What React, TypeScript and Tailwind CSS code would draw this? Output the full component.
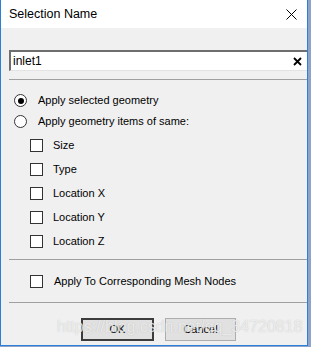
import React from "react";

const font = { fontFamily: '"Liberation Sans", Arial, sans-serif' };

function Radio({ checked }: { checked?: boolean }) {
  return (
    <div className="w-[13px] h-[13px] rounded-full border border-[#333333] bg-white flex items-center justify-center shrink-0">
      {checked && <div className="w-[6px] h-[6px] rounded-full bg-black" />}
    </div>
  );
}

function Check() {
  return <div className="w-[13px] h-[13px] border border-[#333333] bg-white shrink-0" />;
}

function CheckRow({ label }: { label: string }) {
  return (
    <div className="h-[24px] flex items-center pl-[29px]">
      <Check />
      <span className="ml-[10px] text-[11px] text-black leading-none">{label}</span>
    </div>
  );
}

export default function App() {
  return (
    <div className="w-[311px] h-[347px] bg-[#8fa3c9] overflow-hidden" style={font}>
      <div className="relative w-[308px] h-[346px] bg-[#f0f0f0] border-l border-r border-b border-[#2b7fd9] flex flex-col">
        {/* Title bar */}
        <div className="h-[28px] bg-white flex items-center justify-between pl-[8px] pr-[9px] shrink-0">
          <span className="text-[12.5px] text-black">Selection Name</span>
          <svg width="11" height="11" viewBox="0 0 11 11" className="mr-[1px]">
            <path d="M0.5 0.5 L10.5 10.5 M10.5 0.5 L0.5 10.5" stroke="#000" strokeWidth="1" />
          </svg>
        </div>

        {/* Text field */}
        <div className="mt-[22px] ml-[8px] h-[21px] bg-white border-t-2 border-l-2 border-[#6e6e6e] border-b border-b-[#e3e3e3] flex items-center">
          <span className="ml-[2px] text-[12px] text-black leading-none">inlet1</span>
          <svg width="9" height="9" viewBox="0 0 9 9" className="ml-auto mr-[5px]">
            <path d="M1 1 L8 8 M8 1 L1 8" stroke="#000" strokeWidth="1.8" />
          </svg>
        </div>

        <div className="mt-[8px] ml-[8px] h-px bg-[#a0a0a0]" />

        {/* Radios */}
        <div className="mt-[10px] h-[21px] flex items-center pl-[13px]">
          <Radio checked />
          <span className="ml-[11px] text-[11px] text-black leading-none">Apply selected geometry</span>
        </div>
        <div className="h-[21px] flex items-center pl-[13px]">
          <Radio />
          <span className="ml-[11px] text-[11px] text-black leading-none">Apply geometry items of same:</span>
        </div>

        <div className="mt-[1px] flex flex-col">
          <CheckRow label="Size" />
          <CheckRow label="Type" />
          <CheckRow label="Location X" />
          <CheckRow label="Location Y" />
          <CheckRow label="Location Z" />
        </div>

        <div className="mt-[6px] ml-[8px] h-px bg-[#a0a0a0]" />

        <div className="mt-[13px] h-[16px] flex items-center pl-[29px]">
          <Check />
          <span className="ml-[11px] text-[11px] text-black leading-none">Apply To Corresponding Mesh Nodes</span>
        </div>

        <div className="mt-[13px] ml-[8px] h-px bg-[#a0a0a0]" />

        {/* Buttons */}
        <div className="mt-[15px] flex pl-[80px] gap-[11px]">
          <div className="w-[73px] h-[23px] border-2 border-[#3c3c3c] bg-[#e1e1e1] flex items-center justify-center">
            <span className="text-[11px] text-black leading-none">OK</span>
          </div>
          <div className="w-[71px] h-[23px] border border-[#adadad] bg-[#e1e1e1] flex items-center justify-center">
            <span className="text-[11px] text-black leading-none">Cancel</span>
          </div>
        </div>

        {/* Watermark */}
        <div className="absolute left-[56px] top-[319px] text-[16px] leading-none text-white/70 [text-shadow:0_0_1px_rgba(150,150,150,0.6)] pointer-events-none whitespace-nowrap">
          https://blog.csdn.net/qq_34720818
        </div>
      </div>
    </div>
  );
}
